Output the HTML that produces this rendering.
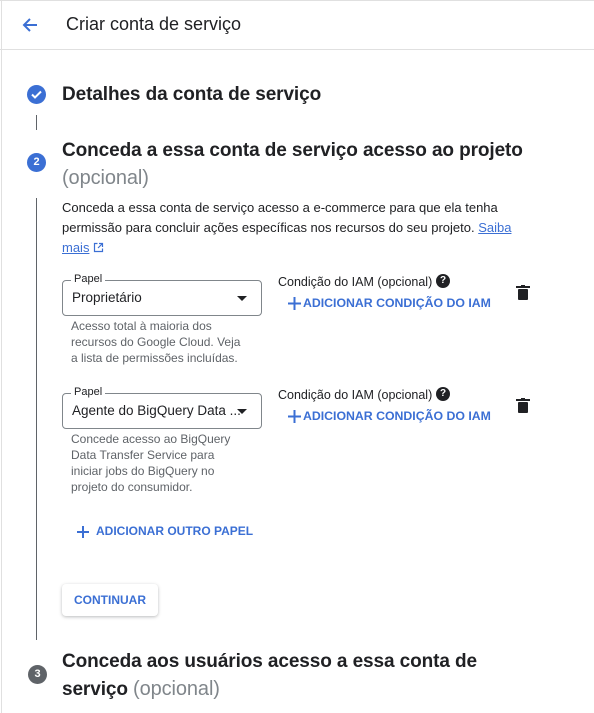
<!DOCTYPE html>
<html><head><meta charset="utf-8"><style>
*{margin:0;padding:0;box-sizing:border-box}
body{width:594px;height:713px;overflow:hidden;background:#fff;font-family:"Liberation Sans",Arial,sans-serif;color:#202124;position:relative}
.a{position:absolute;white-space:nowrap}
.blue{color:#3b6fd4}
.h{font-size:19px;font-weight:bold;letter-spacing:-0.1px}
.grey{color:#80868b;font-weight:normal;font-size:20px}
.help{font-size:12px;color:#5f6368;line-height:16px;white-space:normal}
.box{position:absolute;left:62px;width:200px;height:36px;border:1px solid #80868b;border-radius:4px}
.lbl{position:absolute;left:8px;top:-8px;background:#fff;padding:0 3px;font-size:11px;color:#202124}
.val{position:absolute;left:9px;top:9px;font-size:13.5px}
.tri{position:absolute;right:14px;top:15px;width:0;height:0;border-left:5px solid transparent;border-right:5px solid transparent;border-top:5px solid #202124}
.cond{font-size:12.5px}
.add{font-size:12.3px;font-weight:bold;color:#3b6fd4}
.circ{position:absolute;width:19px;height:19px;border-radius:50%;color:#fff;font-size:11px;font-weight:bold;text-align:center;line-height:19px}
</style></head><body>
<div class="a" style="left:0;top:0;width:594px;height:1px;background:#e0e0e0"></div>
<div class="a" style="left:1px;top:0;width:1px;height:713px;background:#e0e0e0"></div>
<div class="a" style="left:0;top:49px;width:594px;height:1px;background:#e0e0e0"></div>
<svg class="a" style="left:20px;top:15px" width="20" height="20" viewBox="0 0 20 20"><path d="M17 10H4M10 4l-6 6 6 6" stroke="#3b6fd4" stroke-width="2" fill="none"/></svg>
<div class="a" style="left:66px;top:14px;font-size:18px">Criar conta de serviço</div>

<div class="circ" style="left:27px;top:85px;background:#3b6fd4"><svg width="19" height="19" viewBox="0 0 19 19"><path d="M5 9.5l3 3 6-6" stroke="#fff" stroke-width="2" fill="none"/></svg></div>
<div class="a h" style="left:62px;top:84px">Detalhes da conta de serviço</div>
<div class="a" style="left:36px;top:115px;width:1px;height:15px;background:#5f6368"></div>

<div class="circ" style="left:27px;top:153px;background:#3b6fd4">2</div>
<div class="a h" style="left:62px;top:140px">Conceda a essa conta de serviço acesso ao projeto</div>
<div class="a h grey" style="left:62px;top:167px">(opcional)</div>
<div class="a" style="left:36px;top:198px;width:1px;height:442px;background:#5f6368"></div>

<div class="a" style="left:62px;top:198px;font-size:13px;line-height:20px;white-space:normal;width:470px">Conceda a essa conta de serviço acesso a e-commerce para que ela tenha permissão para concluir ações específicas nos recursos do seu projeto. <span class="blue" style="text-decoration:underline">Saiba mais</span> <svg width="11" height="11" viewBox="0 0 11 11" style="vertical-align:-1px"><path d="M4.5 1.5H1.5v8h8V6.5M6 1.5h3.5V5M9.5 1.5L5 6" stroke="#3b6fd4" stroke-width="1.2" fill="none"/></svg></div>

<div class="box" style="top:280px"><span class="lbl">Papel</span><span class="val">Proprietário</span><span class="tri"></span></div>
<div class="a help" style="left:71px;top:318px;width:175px">Acesso total à maioria dos recursos do Google Cloud. Veja a lista de permissões incluídas.</div>
<div class="a cond" style="left:278px;top:275px">Condição do IAM (opcional)</div>
<div class="circ" style="left:436px;top:274px;width:14px;height:14px;line-height:14px;font-size:10px;background:#202124">?</div>
<svg class="a" style="left:288px;top:297px" width="13" height="13" viewBox="0 0 13 13"><path d="M6.5 0v13M0 6.5h13" stroke="#3b6fd4" stroke-width="2"/></svg>
<div class="a add" style="left:303px;top:296px">ADICIONAR CONDIÇÃO DO IAM</div>
<svg class="a" style="left:516px;top:285px" width="14" height="16" viewBox="0 0 14 16"><rect x="0" y="1" width="14" height="2" fill="#202124"/><rect x="5" y="0" width="4" height="2" fill="#202124"/><rect x="2" y="4" width="10" height="11" rx="1" fill="#202124"/></svg>

<div class="box" style="top:393px"><span class="lbl">Papel</span><span class="val">Agente do BigQuery Data ...</span><span class="tri"></span></div>
<div class="a help" style="left:71px;top:431px;width:160px">Concede acesso ao BigQuery Data Transfer Service para iniciar jobs do BigQuery no projeto do consumidor.</div>
<div class="a cond" style="left:278px;top:388px">Condição do IAM (opcional)</div>
<div class="circ" style="left:436px;top:387px;width:14px;height:14px;line-height:14px;font-size:10px;background:#202124">?</div>
<svg class="a" style="left:288px;top:410px" width="13" height="13" viewBox="0 0 13 13"><path d="M6.5 0v13M0 6.5h13" stroke="#3b6fd4" stroke-width="2"/></svg>
<div class="a add" style="left:303px;top:409px">ADICIONAR CONDIÇÃO DO IAM</div>
<svg class="a" style="left:516px;top:398px" width="14" height="16" viewBox="0 0 14 16"><rect x="0" y="1" width="14" height="2" fill="#202124"/><rect x="5" y="0" width="4" height="2" fill="#202124"/><rect x="2" y="4" width="10" height="11" rx="1" fill="#202124"/></svg>

<svg class="a" style="left:76px;top:525px" width="14" height="14" viewBox="0 0 14 14"><path d="M7 1v12M1 7h12" stroke="#3b6fd4" stroke-width="2"/></svg>
<div class="a add" style="left:96px;top:524px;font-size:12px">ADICIONAR OUTRO PAPEL</div>

<div class="a" style="left:62px;top:584px;width:96px;height:32px;border-radius:4px;box-shadow:0 1px 3px rgba(60,64,67,.35);background:#fff;font-size:12px;font-weight:bold;color:#3b6fd4;text-align:center;line-height:32px">CONTINUAR</div>

<div class="circ" style="left:28px;top:665px;background:#5f6368">3</div>
<div class="a h" style="left:62px;top:651px">Conceda aos usuários acesso a essa conta de</div>
<div class="a h" style="left:62px;top:678px">serviço <span class="grey">(opcional)</span></div>
</body></html>
